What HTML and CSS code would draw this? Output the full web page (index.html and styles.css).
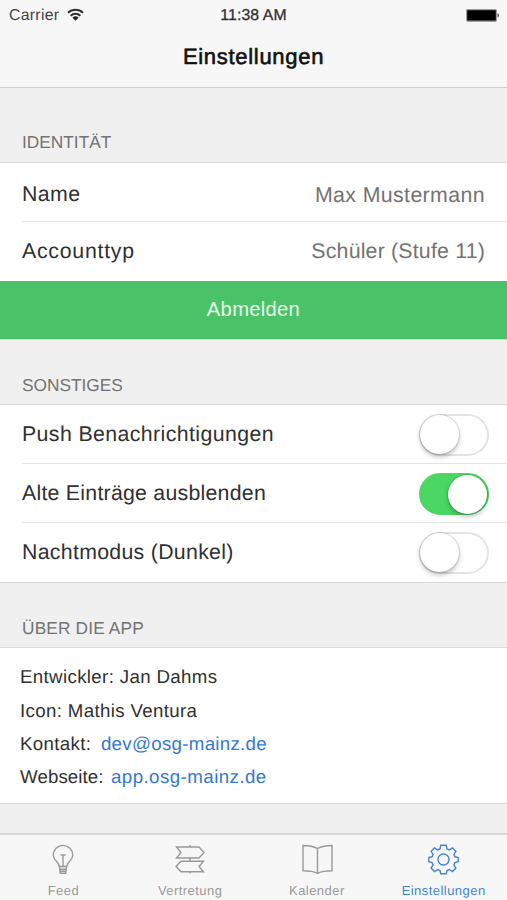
FILE: index.html
```html
<!DOCTYPE html>
<html lang="de">
<head>
<meta charset="utf-8">
<title>Einstellungen</title>
<link rel="stylesheet" href="styles.css">
</head>
<body>
<div class="app">
  <header class="top">
    <div class="status">
      <div class="carrier"><span>Carrier</span>
        <svg width="17" height="13" viewBox="0 0 17 13" fill="none" stroke="#303030" stroke-width="1.9"><path d="M1 4.700a11 11 0 0 1 15 0M3.600 7.700a7.100 7.100 0 0 1 9.800 0"/><path d="M8.500 12.800L5.400 9.700a4.500 4.500 0 0 1 6.200 0z" fill="#222" stroke="none"/></svg>
      </div>
      <span class="time">11:38 AM</span>
      <svg class="battery" width="34" height="13" viewBox="0 0 34 13"><rect x=".6" y=".6" width="29.8" height="11.6" rx="1" fill="#000" stroke="#999" stroke-width="1.2"/><path d="M31.500 4.200c2 .6 2 3.800 0 4.400z" fill="#555"/></svg>
    </div>
    <h1 class="title">Einstellungen</h1>
  </header>
  <main class="content">
    <h2 class="section first">IDENTITÄT</h2>
    <div class="group identity">
      <div class="row"><span class="label name">Name</span><span class="value max">Max Mustermann</span></div>
      <div class="row account"><span class="label acct">Accounttyp</span><span class="value grade">Schüler (Stufe 11)</span></div>
      <button class="logout">Abmelden</button>
    </div>
    <h2 class="section misc">SONSTIGES</h2>
    <div class="group">
      <div class="row toggle-row"><span class="label">Push Benachrichtigungen</span><span class="switch"><i class="knob"></i></span></div>
      <div class="row toggle-row"><span class="label hide-old">Alte Einträge ausblenden</span><span class="switch on"><i class="knob"></i></span></div>
      <div class="row toggle-row"><span class="label night">Nachtmodus (Dunkel)</span><span class="switch"><i class="knob"></i></span></div>
    </div>
    <h2 class="section about-head">ÜBER DIE APP</h2>
    <div class="group about">
      <p>Entwickler: Jan Dahms</p>
      <p>Icon: Mathis Ventura</p>
      <p>Kontakt: <a class="mail">dev@osg-mainz.de</a></p>
      <p class="web">Webseite: <a>app.osg-mainz.de</a></p>
    </div>
  </main>
  <nav class="tabs">
    <div class="tab">
      <svg width="32" height="32" viewBox="0 0 32 32"><path d="M12.200 22.500C12.200 18 6.200 16.500 6.200 11.200a9.800 9.800 0 0 1 19.600 0C25.800 16.500 19.800 18 19.800 22.500zM12.500 22.500l.8 6.700h5.400l.8-6.700M16 22V11M13.500 11h5M13 25.200h6M13.200 27.200h5.600"/></svg>
      <span>Feed</span>
    </div>
    <div class="tab">
      <svg width="32" height="32" viewBox="0 0 32 32"><path d="M2.500 3h22.500l5 5.500-5 5.500h-22.500l4.500-5.500zM29.500 17.200h-22.500l-5 5.300 5 5.300h22.500l-4.500-5.300zM16 1v2M16 14v3.200M16 27.800v1.700"/></svg>
      <span>Vertretung</span>
    </div>
    <div class="tab">
      <svg width="32" height="32" viewBox="0 0 32 32"><path d="M16.500 4.500Q11 1.500 2 1.500v25.300q9 0 14.500 2.500Q22 26.800 31 26.800V1.500Q22 1.500 16.500 4.500zM16.500 4.500v24.800"/></svg>
      <span>Kalender</span>
    </div>
    <div class="tab active">
      <svg width="32" height="32" viewBox="0 0 32 32"><circle cx="15.500" cy="15.500" r="5.500"/><path d="M12.800 1.300h5.400l.8 3.600 2.300 1 3.200-2 3.400 3.400-2 3.200 1 2.300 3.300.7v4.200l-3.300.9-1 2.300 2 3.200-3.400 3.400-3.200-2-2.300 1-.8 3.200h-5.400l-.8-3.200-2.300-1-3.200 2-3.400-3.400 2-3.200-1-2.300-3.300-.9v-4.200l3.300-.7 1-2.300-2-3.200 3.400-3.400 3.200 2 2.300-1z"/></svg>
      <span>Einstellungen</span>
    </div>
  </nav>
</div>
</body>
</html>
```
FILE: styles.css
```css
* { box-sizing: border-box; }
body { margin: 0; font-family: "Liberation Sans", Arial, sans-serif; text-rendering: geometricPrecision; }
.app { width: 507px; height: 900px; display: flex; flex-direction: column; overflow: hidden; background: #f0f0f0; color: #303030; }
h1, h2, p { margin: 0; font-weight: normal; }
.top { height: 88px; background: #f7f7f7; border-bottom: 1px solid #cfcfcf; }
.status { height: 30px; padding: 0 7px 0 9px; display: grid; grid-template-columns: 1fr auto 1fr; align-items: center; font-size: 15.8px; line-height: 30px; }
.carrier { display: flex; align-items: center; gap: 8px; letter-spacing: .3px; color: #444; }
.carrier span, .time { padding-top: 1px; }
.carrier svg { margin-top: -2px; }
.time { letter-spacing: .1px; margin-right: 2px; -webkit-text-stroke: .3px #303030; }
.battery { justify-self: end; }
.title { font-size: 22px; letter-spacing: .7px; line-height: 56px; margin-top: -1px; text-align: center; color: #111; -webkit-text-stroke: .6px #111; }
.content { flex: 1; }
.section { font-size: 17.3px; line-height: 24px; padding-left: 22px; color: #737373; border-bottom: 1px solid #dadada; }
.first { height: 75px; padding-top: 42px; }
.misc { height: 65px; padding-top: 33px; }
.about-head { height: 65px; padding-top: 33px; letter-spacing: .15px; }
.group { background: #fff; border-bottom: 1px solid #dadada; }
.row { height: 59px; margin-left: 22px; padding: 17px 22px 0 0; display: flex; justify-content: space-between; border-bottom: 1px solid #e4e4e4; font-size: 21.3px; line-height: 28px; letter-spacing: .4px; }
.account { padding-top: 15px; border-bottom: 0; }
.row:last-child { border-bottom: 0; }
.acct { letter-spacing: .75px; }
.value { color: #737373; }
.max { padding-top: 1px; }
.grade { letter-spacing: .2px; }
.hide-old { letter-spacing: .25px; }
.night { letter-spacing: .3px; }
.logout { display: block; width: 100%; height: 58px; padding: 0 0 1px; border: 0; background: #4ac368; color: #e9f9ec; font: 20.2px/57px "Liberation Sans", Arial, sans-serif; letter-spacing: .3px; }
.toggle-row { padding: 15px 18px 0 0; }
.switch { width: 70px; height: 42px; margin-top: -6px; border: 2px solid #e4e4e4; border-radius: 21px; display: flex; }
.knob { width: 39px; height: 39px; margin: -1px; border-radius: 50%; background: #fff; box-shadow: 0 0 1px 1px rgba(0,0,0,.12), 0 3px 5px rgba(0,0,0,.24); }
.on { background: #4bd763; border-color: #4bd763; justify-content: flex-end; }
.on .knob { margin: -.5px 0; }
.about { height: 156px; padding: 17px 20px 0; font-size: 18.7px; letter-spacing: .35px; line-height: 24px; }
.about p { height: 33.5px; }
.about .web { margin-top: -1px; letter-spacing: .1px; }
.about a { color: #3478d0; margin-left: 2px; letter-spacing: .45px; }
.about .mail { margin-left: 4px; letter-spacing: .3px; }
.tabs { height: 67px; display: grid; grid-template-columns: repeat(4, 1fr); background: #f7f7f7; border-top: 2px solid #d8d8d8; }
.tab { display: flex; flex-direction: column; align-items: center; padding-top: 9px; color: #999; font-size: 13px; letter-spacing: .45px; line-height: 16px; }
.tab span { margin-top: 7px; }
.tab svg { fill: none; stroke: currentColor; stroke-width: 1.4; }
.active { color: #4584d0; }
```
